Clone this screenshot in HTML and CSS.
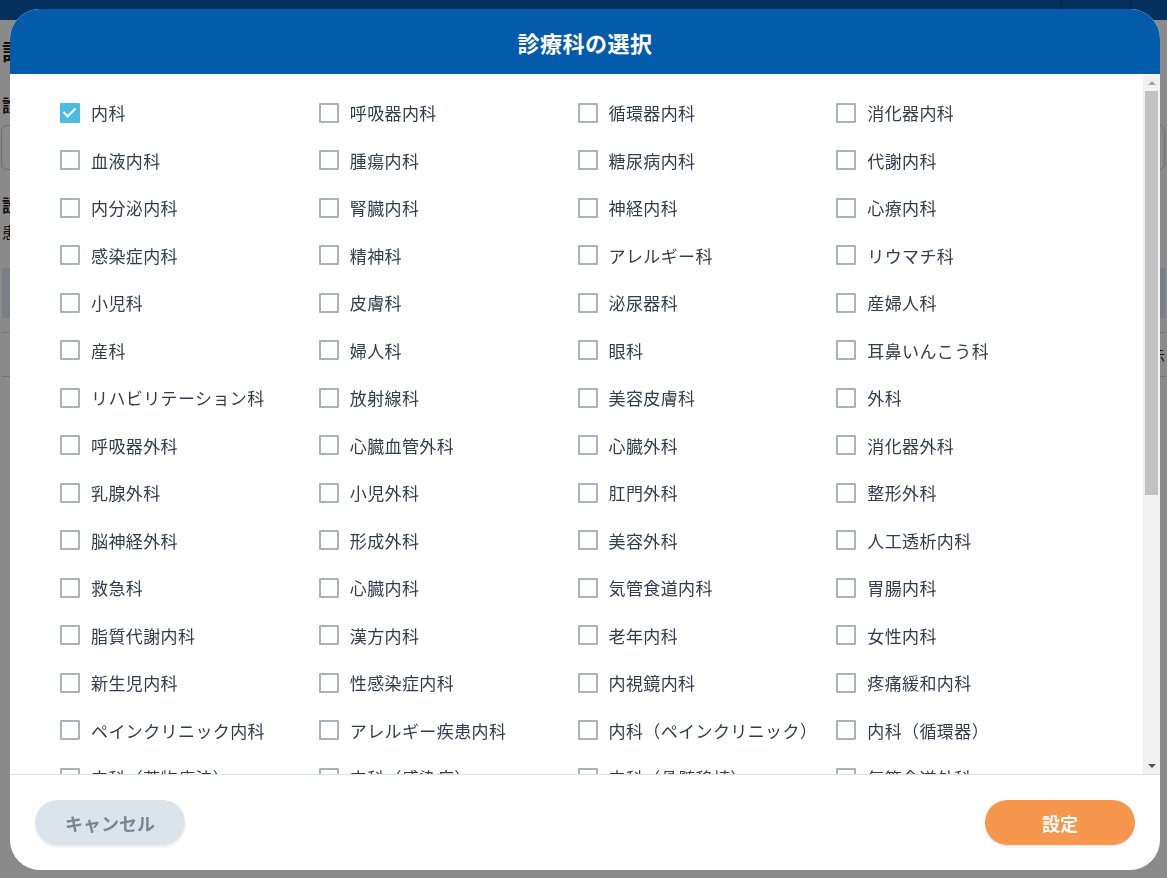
FILE: index.html
```html
<!DOCTYPE html>
<html lang="ja">

<head>
    <meta charset="UTF-8">
    <meta name="viewport" content="width=device-width, initial-scale=1.0">
    <title>診療科の選択</title>
    <link rel="stylesheet" href="styles.css">
</head>

<body>
    <!-- 背景のページ -->
    <header class="topbar">
        <div class="topbar-item">
            <svg class="topbar-icon" viewBox="0 0 24 24" width="24" height="24">
                <circle cx="12" cy="-4" r="9" fill="none" stroke="#ffffff" stroke-width="1.5"/>
                <circle cx="5" cy="2" r="3" fill="none" stroke="#ffffff" stroke-width="1.5"/>
                <circle cx="19" cy="2" r="3" fill="none" stroke="#ffffff" stroke-width="1.5"/>
            </svg>
        </div>
        <div class="topbar-item topbar-item-end"></div>
    </header>
    <main class="page">
        <h2 class="page-title">設定</h2>
        <h3 class="page-label">診療科</h3>
        <div class="page-input"></div>
        <h3 class="page-label page-label-gap">設定項目</h3>
        <p class="page-text">患者さまの情報</p>
        <div class="page-band"></div>
        <div class="page-row page-row-thin"></div>
        <div class="page-row"><span>一覧表示</span></div>
    </main>

    <!-- 診療科の選択モーダル -->
    <div class="overlay">
        <div class="modal">
            <div class="modal-header">診療科の選択</div>
            <div class="modal-body">
                <div class="dept-list">
                    <div class="dept-grid">
                        <label class="dept"><input type="checkbox" checked><span>内科</span></label>
                        <label class="dept"><input type="checkbox"><span>呼吸器内科</span></label>
                        <label class="dept"><input type="checkbox"><span>循環器内科</span></label>
                        <label class="dept"><input type="checkbox"><span>消化器内科</span></label>
                        <label class="dept"><input type="checkbox"><span>血液内科</span></label>
                        <label class="dept"><input type="checkbox"><span>腫瘍内科</span></label>
                        <label class="dept"><input type="checkbox"><span>糖尿病内科</span></label>
                        <label class="dept"><input type="checkbox"><span>代謝内科</span></label>
                        <label class="dept"><input type="checkbox"><span>内分泌内科</span></label>
                        <label class="dept"><input type="checkbox"><span>腎臓内科</span></label>
                        <label class="dept"><input type="checkbox"><span>神経内科</span></label>
                        <label class="dept"><input type="checkbox"><span>心療内科</span></label>
                        <label class="dept"><input type="checkbox"><span>感染症内科</span></label>
                        <label class="dept"><input type="checkbox"><span>精神科</span></label>
                        <label class="dept"><input type="checkbox"><span>アレルギー科</span></label>
                        <label class="dept"><input type="checkbox"><span>リウマチ科</span></label>
                        <label class="dept"><input type="checkbox"><span>小児科</span></label>
                        <label class="dept"><input type="checkbox"><span>皮膚科</span></label>
                        <label class="dept"><input type="checkbox"><span>泌尿器科</span></label>
                        <label class="dept"><input type="checkbox"><span>産婦人科</span></label>
                        <label class="dept"><input type="checkbox"><span>産科</span></label>
                        <label class="dept"><input type="checkbox"><span>婦人科</span></label>
                        <label class="dept"><input type="checkbox"><span>眼科</span></label>
                        <label class="dept"><input type="checkbox"><span>耳鼻いんこう科</span></label>
                        <label class="dept"><input type="checkbox"><span>リハビリテーション科</span></label>
                        <label class="dept"><input type="checkbox"><span>放射線科</span></label>
                        <label class="dept"><input type="checkbox"><span>美容皮膚科</span></label>
                        <label class="dept"><input type="checkbox"><span>外科</span></label>
                        <label class="dept"><input type="checkbox"><span>呼吸器外科</span></label>
                        <label class="dept"><input type="checkbox"><span>心臓血管外科</span></label>
                        <label class="dept"><input type="checkbox"><span>心臓外科</span></label>
                        <label class="dept"><input type="checkbox"><span>消化器外科</span></label>
                        <label class="dept"><input type="checkbox"><span>乳腺外科</span></label>
                        <label class="dept"><input type="checkbox"><span>小児外科</span></label>
                        <label class="dept"><input type="checkbox"><span>肛門外科</span></label>
                        <label class="dept"><input type="checkbox"><span>整形外科</span></label>
                        <label class="dept"><input type="checkbox"><span>脳神経外科</span></label>
                        <label class="dept"><input type="checkbox"><span>形成外科</span></label>
                        <label class="dept"><input type="checkbox"><span>美容外科</span></label>
                        <label class="dept"><input type="checkbox"><span>人工透析内科</span></label>
                        <label class="dept"><input type="checkbox"><span>救急科</span></label>
                        <label class="dept"><input type="checkbox"><span>心臓内科</span></label>
                        <label class="dept"><input type="checkbox"><span>気管食道内科</span></label>
                        <label class="dept"><input type="checkbox"><span>胃腸内科</span></label>
                        <label class="dept"><input type="checkbox"><span>脂質代謝内科</span></label>
                        <label class="dept"><input type="checkbox"><span>漢方内科</span></label>
                        <label class="dept"><input type="checkbox"><span>老年内科</span></label>
                        <label class="dept"><input type="checkbox"><span>女性内科</span></label>
                        <label class="dept"><input type="checkbox"><span>新生児内科</span></label>
                        <label class="dept"><input type="checkbox"><span>性感染症内科</span></label>
                        <label class="dept"><input type="checkbox"><span>内視鏡内科</span></label>
                        <label class="dept"><input type="checkbox"><span>疼痛緩和内科</span></label>
                        <label class="dept"><input type="checkbox"><span>ペインクリニック内科</span></label>
                        <label class="dept"><input type="checkbox"><span>アレルギー疾患内科</span></label>
                        <label class="dept"><input type="checkbox"><span>内科（ペインクリニック）</span></label>
                        <label class="dept"><input type="checkbox"><span>内科（循環器）</span></label>
                        <label class="dept"><input type="checkbox"><span>内科（薬物療法）</span></label>
                        <label class="dept"><input type="checkbox"><span>内科（感染症）</span></label>
                        <label class="dept"><input type="checkbox"><span>内科（骨髄移植）</span></label>
                        <label class="dept"><input type="checkbox"><span>気管食道外科</span></label>
                        <label class="dept"><input type="checkbox"><span>胃腸外科</span></label>
                        <label class="dept"><input type="checkbox"><span>大腸外科</span></label>
                        <label class="dept"><input type="checkbox"><span>食道外科</span></label>
                        <label class="dept"><input type="checkbox"><span>肝臓外科</span></label>
                        <label class="dept"><input type="checkbox"><span>膵臓外科</span></label>
                        <label class="dept"><input type="checkbox"><span>胆のう外科</span></label>
                        <label class="dept"><input type="checkbox"><span>移植外科</span></label>
                        <label class="dept"><input type="checkbox"><span>内分泌外科</span></label>
                        <label class="dept"><input type="checkbox"><span>甲状腺外科</span></label>
                        <label class="dept"><input type="checkbox"><span>腫瘍外科</span></label>
                        <label class="dept"><input type="checkbox"><span>血管外科</span></label>
                        <label class="dept"><input type="checkbox"><span>頭頸部外科</span></label>
                        <label class="dept"><input type="checkbox"><span>脊椎外科</span></label>
                        <label class="dept"><input type="checkbox"><span>手外科</span></label>
                        <label class="dept"><input type="checkbox"><span>美容形成外科</span></label>
                        <label class="dept"><input type="checkbox"><span>小児整形外科</span></label>
                        <label class="dept"><input type="checkbox"><span>小児眼科</span></label>
                        <label class="dept"><input type="checkbox"><span>小児皮膚科</span></label>
                        <label class="dept"><input type="checkbox"><span>小児泌尿器科</span></label>
                        <label class="dept"><input type="checkbox"><span>小児歯科</span></label>
                        <label class="dept"><input type="checkbox"><span>歯科</span></label>
                        <label class="dept"><input type="checkbox"><span>矯正歯科</span></label>
                        <label class="dept"><input type="checkbox"><span>歯科口腔外科</span></label>
                        <label class="dept"><input type="checkbox"><span>病理診断科</span></label>
                        <label class="dept"><input type="checkbox"><span>臨床検査科</span></label>
                        <label class="dept"><input type="checkbox"><span>麻酔科</span></label>
                        <label class="dept"><input type="checkbox"><span>放射線治療科</span></label>
                        <label class="dept"><input type="checkbox"><span>放射線診断科</span></label>
                        <label class="dept"><input type="checkbox"><span>緩和ケア内科</span></label>
                        <label class="dept"><input type="checkbox"><span>総合診療科</span></label>
                        <label class="dept"><input type="checkbox"><span>性病科</span></label>
                        <label class="dept"><input type="checkbox"><span>気管支内科</span></label>
                    </div>
                </div>
                <!-- スクロールバー -->
                <div class="scrollbar">
                    <div class="scroll-btn"><span class="arrow-up"></span></div>
                    <div class="scroll-track">
                        <div class="scroll-thumb"></div>
                    </div>
                    <div class="scroll-btn"><span class="arrow-down"></span></div>
                </div>
            </div>
            <div class="modal-footer">
                <button class="btn btn-cancel">キャンセル</button>
                <button class="btn btn-submit">設定</button>
            </div>
        </div>
    </div>
</body>

</html>
```

FILE: styles.css
```css
body {
    margin: 0;
    font-family: "Noto Sans CJK JP", "Noto Sans", sans-serif;
    background-color: #ffffff;
    color: #222222;
}

/* 背景のページ */
.topbar {
    height: 20px;
    background-color: #0659ab;
    display: flex;
    justify-content: flex-end;
}

.topbar-item {
    width: 68px;
    border-left: 1px solid #0a3a6c;
    display: flex;
    justify-content: center;
    overflow: hidden;
}

.topbar-item-end {
    width: 36px;
}

.topbar-icon {
    margin-top: -10px;
}

.page {
    padding: 0 2px;
}

.page-title {
    font-size: 22px;
    font-weight: bold;
    margin: 15px 0 0;
    line-height: 30px;
}

.page-label {
    font-size: 17px;
    font-weight: bold;
    margin: 28px 0 8px;
    line-height: 24px;
}

.page-label-gap {
    margin-top: 23px;
    margin-bottom: 0;
}

.page-input {
    height: 43px;
    border: 1px solid #cccccc;
    border-radius: 6px;
    margin-left: -1px;
}

.page-text {
    font-size: 15px;
    margin: 4px 0 0;
    line-height: 22px;
}

.page-band {
    height: 50px;
    background-color: #e2ebf6;
    margin-top: 25px;
}

.page-row {
    height: 43px;
    border-bottom: 1px solid #cfd6de;
    display: flex;
    align-items: center;
    justify-content: flex-end;
    font-size: 14px;
}

.page-row-thin {
    height: 14px;
}

/* モーダル */
.overlay {
    position: fixed;
    inset: 0;
    background-color: rgba(0, 0, 0, 0.46);
    padding: 9px 7px 0 10px;
}

.modal {
    width: 1150px;
    height: 861px;
    background-color: #ffffff;
    border-radius: 30px;
    overflow: hidden;
    display: flex;
    flex-direction: column;
}

.modal-header {
    height: 65px;
    flex-shrink: 0;
    background-color: #055bab;
    color: #ffffff;
    font-size: 22px;
    font-weight: bold;
    display: flex;
    align-items: center;
    justify-content: center;
    letter-spacing: 0.5px;
}

.modal-body {
    flex: 1;
    min-height: 0;
    display: flex;
    border-bottom: 1px solid #dde2e8;
}

.dept-list {
    flex: 1;
    overflow-y: auto;
    scrollbar-width: none;
}

.dept-grid {
    display: grid;
    grid-template-columns: repeat(4, 1fr);
    grid-auto-rows: 47.5px;
    padding: 15px 48px 24px 50px;
}

.dept {
    display: flex;
    align-items: center;
    gap: 11px;
    font-size: 17px;
    letter-spacing: 0.4px;
    color: #313d4c;
    white-space: nowrap;
    cursor: pointer;
}

.dept input {
    appearance: none;
    -webkit-appearance: none;
    width: 20px;
    height: 20px;
    margin: 0;
    border: 2px solid #a9b3bd;
    border-radius: 1px;
    background-color: #ffffff;
    position: relative;
    flex-shrink: 0;
    cursor: pointer;
}

.dept input:checked {
    border-color: #4bbde3;
    background-color: #4bbde3;
}

.dept input:checked::after {
    content: "";
    position: absolute;
    left: 4px;
    top: 0px;
    width: 5px;
    height: 10px;
    border-right: 2px solid #ffffff;
    border-bottom: 2px solid #ffffff;
    transform: rotate(45deg);
}

/* スクロールバー */
.scrollbar {
    width: 17px;
    flex-shrink: 0;
    background-color: #f1f1f1;
    display: flex;
    flex-direction: column;
}

.scroll-btn {
    height: 17px;
    display: flex;
    align-items: center;
    justify-content: center;
}

.arrow-up {
    border-left: 4px solid transparent;
    border-right: 4px solid transparent;
    border-bottom: 4px solid #a3a3a3;
}

.arrow-down {
    border-left: 4px solid transparent;
    border-right: 4px solid transparent;
    border-top: 4px solid #505050;
}

.scroll-track {
    flex: 1;
    padding: 0 2px;
}

.scroll-thumb {
    height: 404px;
    background-color: #c1c1c1;
}

.modal-footer {
    height: 95px;
    flex-shrink: 0;
    display: flex;
    align-items: center;
    justify-content: space-between;
    padding: 0 25px;
}

.btn {
    width: 150px;
    height: 45px;
    border: none;
    border-radius: 23px;
    font-family: inherit;
    font-size: 18px;
    font-weight: bold;
    cursor: pointer;
    box-shadow: 0 2px 3px rgba(0, 0, 0, 0.08);
}

.btn-cancel {
    background-color: #dbe3eb;
    color: #7b8592;
}

.btn-submit {
    background-color: #f7964d;
    color: #ffffff;
}
```
